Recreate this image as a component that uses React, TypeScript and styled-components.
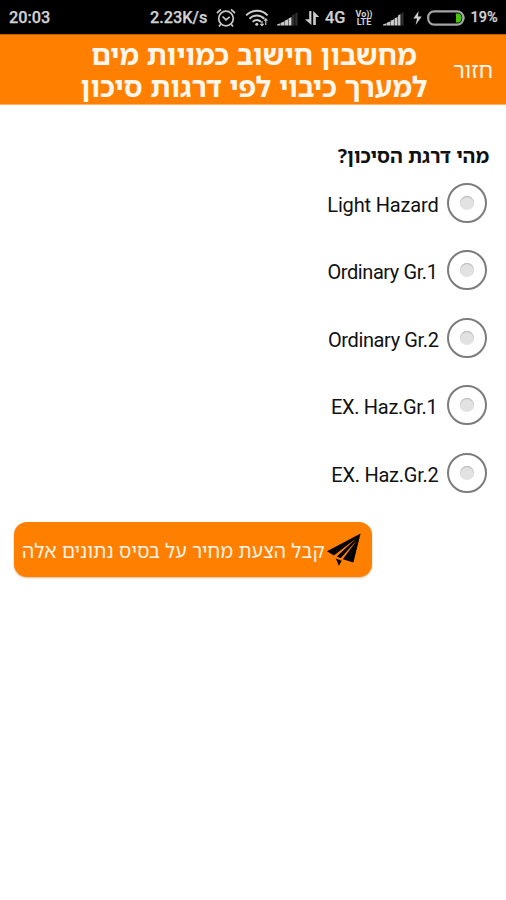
import React from "react";
import styled, { createGlobalStyle } from "styled-components";

const hebrew = '"Noto Sans Hebrew", "Open Sans", sans-serif';

const GlobalStyle = createGlobalStyle`
  * { box-sizing: border-box; }
  body { margin: 0; background: #fff; }
`;

const Screen = styled.div`
  width: 506px;
  height: 900px;
  overflow: hidden;
  background: #fff;
  font-family: Roboto, sans-serif;
  color: #111;
`;

const StatusBar = styled.div`
  height: 34px;
  padding: 2px 6px 0 9px;
  display: flex;
  align-items: center;
  background: #000;
  color: #d2d2d2;
`;

const StatusText = styled.span<{ $size?: number; $gap?: number; $width: number }>`
  flex: none;
  width: ${(p) => p.$width}px;
  margin-left: ${(p) => p.$gap ?? 0}px;
  font-size: ${(p) => p.$size ?? 16.3}px;
  font-weight: 500;
  line-height: 20px;
  white-space: nowrap;
  -webkit-text-stroke: 0.25px currentColor;
`;

const StatusIcon = styled.svg<{ $gap: number }>`
  flex: none;
  display: block;
  margin-left: ${(p) => p.$gap}px;
`;

const Volte = styled.span`
  flex: none;
  display: grid;
  grid-auto-rows: 8px;
  justify-items: center;
  width: 18px;
  margin-left: 9px;
  font-size: 9px;
  font-weight: 700;
  line-height: 8px;
`;

const Header = styled.header`
  height: 71px;
  display: grid;
  grid-template-columns: 80px 348px 1fr;
  border-top: 1px solid #c46200;
  border-bottom: 1px solid #ffb366;
  background: #ff8000;
  color: #fff6ee;
`;

const Title = styled.h1`
  grid-column: 2;
  margin: 3px 0 0;
  display: grid;
  grid-auto-rows: 32px;
  justify-items: center;
  font: 700 28px/32px ${hebrew};
`;

const TitleLine = styled.span`
  white-space: nowrap;
`;

const BackButton = styled.button`
  border: 0;
  padding: 0 13px 0 0;
  background: none;
  color: inherit;
  font: 400 22px/30px ${hebrew};
  text-align: right;
`;

const Question = styled.h2`
  margin: 0;
  padding: 37px 17px 0 0;
  height: 64px;
  font: 700 19.4px/28px ${hebrew};
`;

const Options = styled.div`
  display: grid;
  grid-auto-rows: 67.5px;
`;

const Option = styled.label`
  display: flex;
  align-items: center;
  justify-content: flex-end;
  gap: 8px;
  padding-right: 19.5px;
  font-size: 20px;
  direction: ltr;
`;

const OptionText = styled.span<{ $inset: number; $tracking: number }>`
  padding: 4px ${(p) => p.$inset}px 0 0;
  line-height: 24px;
  letter-spacing: ${(p) => p.$tracking}px;
  white-space: nowrap;
`;

const Ring = styled.span`
  width: 40px;
  height: 40px;
  border: 2px solid #7c7c7c;
  border-radius: 50%;
  display: grid;
  place-items: center;
`;

const Dot = styled.span`
  width: 14px;
  height: 14px;
  border-radius: 50%;
  background: #e2e2e2;
  box-shadow: inset 0 1px 1px #b5b5b5;
`;

const QuoteButton = styled.button`
  display: flex;
  align-items: center;
  justify-content: space-between;
  width: 358px;
  height: 55px;
  margin: 15.5px 134px 0 0;
  padding: 0 11px 0 8px;
  direction: ltr;
  border: 0;
  border-radius: 13px;
  background: #ff8000;
  box-shadow: 0 1px 2px #d9b896;
  color: #fff3e6;
  font: 400 19.4px/28px ${hebrew};
`;

const QuoteText = styled.span`
  padding-top: 3px;
  direction: rtl;
  white-space: nowrap;
`;

const AlarmIcon = () => (
  <StatusIcon $gap={8} width="20" height="20" viewBox="0 0 20 20" fill="none" stroke="#c8c8c8" strokeWidth="1.7">
    <circle cx="10" cy="10.5" r="7.3" />
    <path d="M6.5 8.5 10 11.8l3.7-3M1 5l4-3.6M19 5l-4-3.6M4.8 16.2 3 18.6M15.2 16.2l1.8 2.4" />
  </StatusIcon>
);

const WifiIcon = () => (
  <StatusIcon $gap={9} width="24" height="18" viewBox="0 0 24 18" fill="none" stroke="#cfcfcf" strokeWidth="2">
    <path d="M1.2 6.4C7.2.2 16.8.2 22.6 6.4M4.5 9.7c4.2-4.3 10.6-4.3 14.8 0M7.7 12.9c2.5-2.5 5.8-2.5 8.3 0" />
    <circle cx="11.8" cy="15.3" r="1.5" fill="#cfcfcf" stroke="none" />
    <path d="M17 12v4.4M20.8 10v6M15.4 14.8l1.6 1.8 1.6-1.8M19.2 11.7l1.6-1.8 1.6 1.8" strokeWidth="1.1" />
  </StatusIcon>
);

const SignalIcon = ({ gap, strong }: { gap: number; strong?: boolean }) => (
  <StatusIcon $gap={gap} width="21" height="18" viewBox="0 0 21 18">
    <path d="M0 16.5v-1l3.4-1.3v2.3zM3.8 13.8l3.4-1.4v4.1H3.8zM7.6 11.8l3.4-1.5v6.2H7.6z" fill="#c8c8c8" />
    <path d="M11.5 9.5 14.5 8v8.5h-3z" fill="#d0d0d0" />
    <path d="M15 6.5 17.5 5v11.5H15z" fill={strong ? "#c4c4c4" : "#303030"} />
    <path d="M18.2 4.5 20.5 3v13.5h-2.3z" fill="#303030" />
  </StatusIcon>
);

const DataIcon = () => (
  <StatusIcon $gap={7} width="15" height="16" viewBox="0 0 15 16" fill="#cecece">
    <path d="M4.2 1h2.2v14L0 9.2h4.2zM8.2 1l6 6h-3.4v8H8.2z" />
  </StatusIcon>
);

const BatteryIcon = () => (
  <StatusIcon $gap={4.5} width="39" height="16" viewBox="0 0 39 16">
    <rect x="1.2" y="1.3" width="35" height="13.4" rx="6" fill="none" stroke="#a5a5a5" strokeWidth="2.2" />
    <path d="M37.3 5.5q1.6 2.5 0 5z" fill="#a5a5a5" />
    <path d="M29 3.5h3.2q2.4 1.3 2.4 4.5t-2.4 4.5H29z" fill="#48c40c" />
  </StatusIcon>
);

const PlaneIcon = () => (
  <svg width="34" height="33" viewBox="0 0 34 33" fill="#050300">
    <path d="M33.6.5 0 18.3l6.9 4.3L29.3 5.2 9.8 23.6l3.8 1.6L30.3 6.8 15.8 26.2l10.6 3.3zM8.8 25.6l6 2.1-2.9 5z" />
  </svg>
);

const options = [
  { label: "Light Hazard", inset: 0, tracking: -0.17 },
  { label: "Ordinary Gr.1", inset: 1, tracking: -0.42 },
  { label: "Ordinary Gr.2", inset: 0, tracking: -0.38 },
  { label: "EX. Haz.Gr.1", inset: 1, tracking: -0.3 },
  { label: "EX. Haz.Gr.2", inset: 0, tracking: -0.25 },
];

export default function App() {
  return (
    <Screen>
      <GlobalStyle />
      <StatusBar>
        <StatusText $width={41}>20:03</StatusText>
        <StatusText $width={58} $gap={100}>2.23K/s</StatusText>
        <AlarmIcon />
        <WifiIcon />
        <SignalIcon gap={8} />
        <DataIcon />
        <StatusText $width={21} $gap={5}>4G</StatusText>
        <Volte><span>Vo))</span><span>LTE</span></Volte>
        <SignalIcon gap={10} strong />
        <StatusIcon $gap={9} width="9" height="14" viewBox="0 0 9 15" fill="#cecece">
          <path d="M5.7 0 0 8h4L2.5 15 9 6H5z" />
        </StatusIcon>
        <BatteryIcon />
        <StatusText $width={28} $gap={5} $size={14.5}>19%</StatusText>
      </StatusBar>
      <Header>
        <Title dir="rtl">
          <TitleLine>מחשבון חישוב כמויות מים</TitleLine>
          <TitleLine>למערך כיבוי לפי דרגות סיכון</TitleLine>
        </Title>
        <BackButton>חזור</BackButton>
      </Header>
      <main dir="rtl">
        <Question>מהי דרגת הסיכון?</Question>
        <Options>
          {options.map(({ label, inset, tracking }) => (
            <Option key={label}>
              <OptionText $inset={inset} $tracking={tracking}>{label}</OptionText>
              <Ring><Dot /></Ring>
            </Option>
          ))}
        </Options>
        <QuoteButton>
          <QuoteText>קבל הצעת מחיר על בסיס נתונים אלה</QuoteText>
          <PlaneIcon />
        </QuoteButton>
      </main>
    </Screen>
  );
}
